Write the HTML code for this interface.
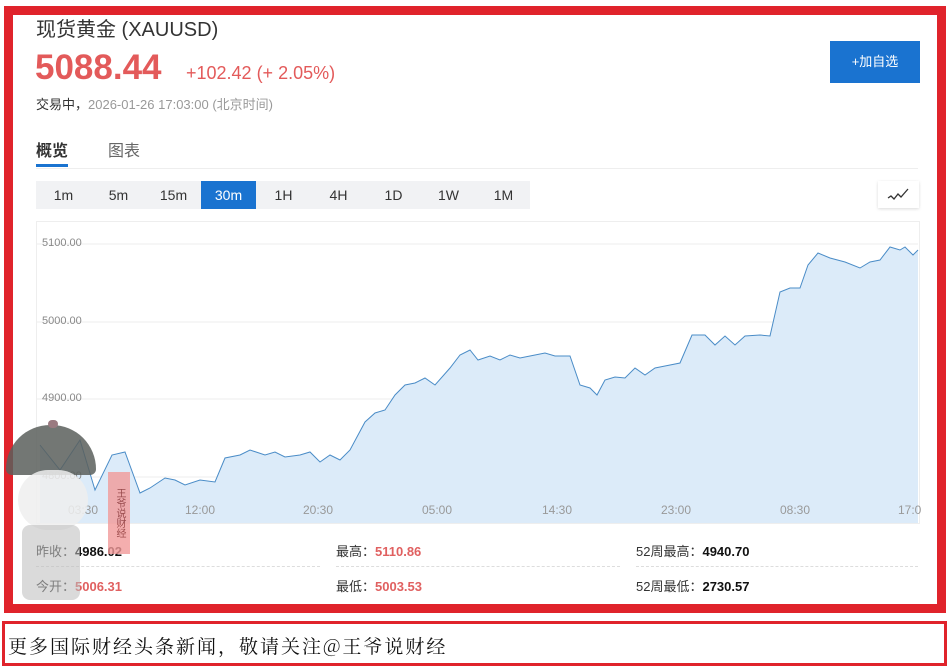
<!DOCTYPE html>
<html><head><meta charset="utf-8"><style>
*{margin:0;padding:0;box-sizing:border-box}
body{width:949px;height:667px;background:#fff;position:relative;overflow:hidden;font-family:"Liberation Sans","Noto Sans CJK SC",sans-serif;color:#333}
.a{position:absolute;white-space:nowrap}
.frame{position:absolute;left:4px;top:6px;width:942px;height:607px;border:9px solid #e0232b;border-top-width:9px}
.cap{position:absolute;left:2px;top:621px;width:945px;height:45px;border:3px solid #e0232b;background:#fff}
.tf{position:absolute;top:181px;height:28px;line-height:28px;font-size:14px;text-align:center;color:#333}
.lbl{font-size:13px;color:#333}
.red{color:#e06060;font-weight:bold}
.blk{color:#111;font-weight:bold}
.xl{position:absolute;top:503px;font-size:12px;color:#999}
.yl{position:absolute;left:42px;font-size:11px;color:#888}
</style></head><body>
<div class="frame"></div>
<div class="a" style="left:36px;top:13px;font-size:20px;color:#333">现货黄金 (XAUUSD)</div>
<div class="a" style="left:35px;top:48px;font-size:35px;font-weight:bold;color:#e35a5a">5088.44</div>
<div class="a" style="left:186px;top:63px;font-size:18px;color:#e35a5a">+102.42 (+ 2.05%)</div>
<div class="a" style="left:36px;top:94px;font-size:13px;color:#999"><span style="color:#333">交易中，</span>2026-01-26 17:03:00 (北京时间)</div>
<div class="a" style="left:830px;top:41px;width:90px;height:42px;background:#1a73d0;color:#fff;font-size:13px;text-align:center;line-height:42px">+加自选</div>
<div class="a" style="left:36px;top:137px;font-size:16px;font-weight:bold;color:#333">概览</div>
<div class="a" style="left:36px;top:164px;width:32px;height:3px;background:#1a73d0"></div>
<div class="a" style="left:108px;top:137px;font-size:16px;color:#666">图表</div>
<div class="a" style="left:36px;top:168px;width:882px;height:1px;background:#eee"></div>
<div class="a" style="left:36px;top:181px;width:494px;height:28px;background:#f1f2f4"></div>
<div class="tf" style="left:36px;width:55px">1m</div>
<div class="tf" style="left:91px;width:55px">5m</div>
<div class="tf" style="left:146px;width:55px">15m</div>
<div class="tf" style="left:201px;width:55px;background:#1a73d0;color:#fff">30m</div>
<div class="tf" style="left:256px;width:55px">1H</div>
<div class="tf" style="left:311px;width:55px">4H</div>
<div class="tf" style="left:366px;width:55px">1D</div>
<div class="tf" style="left:421px;width:55px">1W</div>
<div class="tf" style="left:476px;width:55px">1M</div>
<div class="a" style="left:878px;top:181px;width:41px;height:27px;background:#fff;box-shadow:0 1px 3px rgba(0,0,0,.15)">
<svg width="41" height="27"><polyline points="10,17 13,15 16,18 20,13 23,16 30,8" fill="none" stroke="#333" stroke-width="1.3"/></svg></div>
<div class="a" style="left:36px;top:221px;width:884px;height:303px;border:1px solid #eee"></div>
<svg class="a" style="left:0;top:0" width="949" height="600">
<line x1="37" y1="244" x2="918" y2="244" stroke="#eee"/>
<line x1="37" y1="322" x2="918" y2="322" stroke="#eee"/>
<line x1="37" y1="399" x2="918" y2="399" stroke="#eee"/>
<line x1="37" y1="477" x2="918" y2="477" stroke="#eee"/>
<polygon fill="#dcebf9" points="40,445 60,470 80,440 95,490 112,455 125,452 140,493 150,488 165,478 175,480 185,485 200,480 215,482 225,458 240,455 250,450 265,455 275,452 285,457 300,455 310,452 320,462 330,455 340,460 350,450 365,422 375,413 385,410 395,395 405,385 415,383 425,378 435,385 450,368 460,355 470,350 478,360 490,356 500,360 510,355 520,358 530,356 545,353 555,356 570,356 580,385 590,388 597,395 605,380 615,377 625,378 635,368 645,375 655,368 665,366 680,363 692,335 705,335 715,345 725,336 735,345 745,336 760,335 770,336 780,292 790,288 800,288 808,265 818,253 830,258 845,262 860,268 870,262 880,260 890,247 900,250 905,247 913,255 918,250 918,523 40,523"/>
<polyline fill="none" stroke="#4a8cc7" stroke-width="1" points="40,445 60,470 80,440 95,490 112,455 125,452 140,493 150,488 165,478 175,480 185,485 200,480 215,482 225,458 240,455 250,450 265,455 275,452 285,457 300,455 310,452 320,462 330,455 340,460 350,450 365,422 375,413 385,410 395,395 405,385 415,383 425,378 435,385 450,368 460,355 470,350 478,360 490,356 500,360 510,355 520,358 530,356 545,353 555,356 570,356 580,385 590,388 597,395 605,380 615,377 625,378 635,368 645,375 655,368 665,366 680,363 692,335 705,335 715,345 725,336 735,345 745,336 760,335 770,336 780,292 790,288 800,288 808,265 818,253 830,258 845,262 860,268 870,262 880,260 890,247 900,250 905,247 913,255 918,250"/>
</svg>
<div class="yl" style="top:237px">5100.00</div>
<div class="yl" style="top:315px">5000.00</div>
<div class="yl" style="top:392px">4900.00</div>
<div class="yl" style="top:470px">4800.00</div>
<div class="xl" style="left:68px">03:30</div>
<div class="xl" style="left:185px">12:00</div>
<div class="xl" style="left:303px">20:30</div>
<div class="xl" style="left:422px">05:00</div>
<div class="xl" style="left:542px">14:30</div>
<div class="xl" style="left:661px">23:00</div>
<div class="xl" style="left:780px">08:30</div>
<div class="xl" style="left:898px">17:0</div>
<div class="a lbl" style="left:36px;top:541px">昨收：<span class="blk">4986.02</span></div>
<div class="a lbl" style="left:36px;top:576px">今开：<span class="red">5006.31</span></div>
<div class="a lbl" style="left:336px;top:541px">最高：<span class="red">5110.86</span></div>
<div class="a lbl" style="left:336px;top:576px">最低：<span class="red">5003.53</span></div>
<div class="a lbl" style="left:636px;top:541px">52周最高：<span class="blk">4940.70</span></div>
<div class="a lbl" style="left:636px;top:576px">52周最低：<span class="blk">2730.57</span></div>
<div class="a" style="left:36px;top:566px;width:284px;border-top:1px dashed #ddd"></div>
<div class="a" style="left:336px;top:566px;width:284px;border-top:1px dashed #ddd"></div>
<div class="a" style="left:636px;top:566px;width:282px;border-top:1px dashed #ddd"></div>
<!-- mascot approximation -->
<div class="a" style="left:6px;top:425px;width:90px;height:50px;border-radius:45px 45px 6px 6px;background:#5b5f5c;opacity:.85"></div>
<div class="a" style="left:48px;top:420px;width:10px;height:8px;border-radius:5px;background:#9a7a80"></div>
<div class="a" style="left:18px;top:470px;width:70px;height:60px;border-radius:30px;background:#eee;opacity:.85"></div>
<div class="a" style="left:22px;top:525px;width:58px;height:75px;background:#bbb;opacity:.55;border-radius:8px"></div>
<div class="a" style="left:108px;top:472px;width:22px;height:82px;background:#f29a9a;opacity:.8;font-size:10px;color:#822;writing-mode:vertical-rl;text-align:center;line-height:22px">王爷说财经</div>
<div class="cap"></div>
<div class="a" style="left:8px;top:632px;font-size:19px;color:#111;letter-spacing:2px;font-family:'Noto Serif CJK SC','Liberation Serif',serif">更多国际财经头条新闻，敬请关注@王爷说财经</div>
</body></html>
